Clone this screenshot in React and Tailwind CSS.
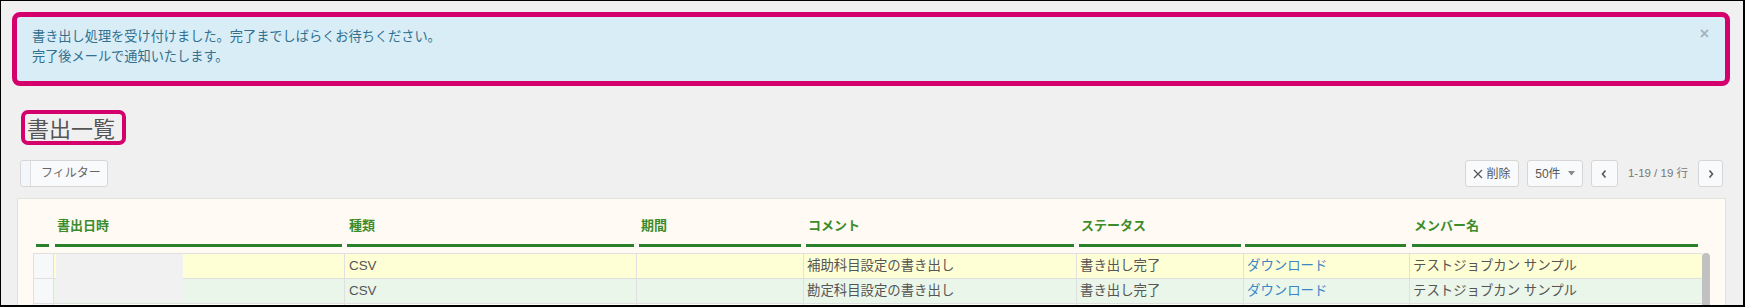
import React from 'react';

const FONT = "font-['Liberation_Sans','Noto_Sans_CJK_JP',sans-serif]";

const columns = [
  { key: 'check', label: '', width: 'w-[20px]', line: 'pl-[3px] pr-[4px]' },
  { key: 'date', label: '書出日時', width: 'w-[291px]', line: 'pl-[2px] pr-[2px]' },
  { key: 'type', label: '種類', width: 'w-[292px]', line: 'pl-[3px] pr-[2px]' },
  { key: 'period', label: '期間', width: 'w-[167px]', line: 'pl-[3px] pr-[2px]' },
  { key: 'comment', label: 'コメント', width: 'w-[273px]', line: 'pl-[3px] pr-[2px]' },
  { key: 'status', label: 'ステータス', width: 'w-[167px]', line: 'pl-[3px] pr-[2px]' },
  { key: 'download', label: '', width: 'w-[166px]', line: 'pl-[2px] pr-[3px]' },
  { key: 'member', label: 'メンバー名', width: 'w-[293px]', line: 'pl-[3px] pr-[4px]' },
];

const rows = [
  { bg: 'bg-[#ffffd6]', type: 'CSV', comment: '補助科目設定の書き出し', status: '書き出し完了', link: 'ダウンロード', member: 'テストジョブカン サンプル' },
  { bg: 'bg-[#eaf6ea]', type: 'CSV', comment: '勘定科目設定の書き出し', status: '書き出し完了', link: 'ダウンロード', member: 'テストジョブカン サンプル' },
  { bg: 'bg-[#fffdf6]', type: '', comment: '', status: '', link: '', member: '' },
];

const ChevronLeft = () => (
  <svg width="8" height="10" viewBox="0 0 8 10" fill="none">
    <path d="M5.5 1.5L2.5 5l3 3.5" stroke="#555" strokeWidth="1.6" />
  </svg>
);

const ChevronRight = () => (
  <svg width="8" height="10" viewBox="0 0 8 10" fill="none">
    <path d="M2.5 1.5L5.5 5l-3 3.5" stroke="#555" strokeWidth="1.6" />
  </svg>
);

const ToolButton = ({ className = '', children }) => (
  <button className={`h-[27px] flex items-center justify-center rounded-[3px] border border-[#d6d6d6] bg-[#f9fafc] text-[12px] text-[#555] ${className}`}>
    {children}
  </button>
);

const App = () => {
  return (
    <div className={`w-[1745px] h-[307px] overflow-hidden bg-[#f0f0f0] border-black border-t border-l border-r-2 border-b-2 ${FONT}`}>
      {/* Alert */}
      <div className="mt-[11px] ml-[11px] w-[1718px] h-[74px] rounded-[8px] border-[5px] border-[#d4006b] bg-[#d9edf7] relative">
        <div className="pt-[10px] pl-[15px] text-[13.2px] leading-[20px] text-[#31708f]">
          <p>書き出し処理を受け付けました。完了までしばらくお待ちください。</p>
          <p>完了後メールで通知いたします。</p>
        </div>
        <span className="absolute right-[16px] top-[9px] text-[16px] font-bold leading-none text-[#a3b4bd]">×</span>
      </div>

      {/* Title */}
      <div className="mt-[24px] ml-[20px] inline-flex h-[35px] items-center rounded-[7px] border-4 border-[#d4006b] pl-[2px] pr-[7px]">
        <h1 className="text-[22px] leading-[27px] text-[#555] font-['Noto_Sans_CJK_JP',sans-serif]">書出一覧</h1>
      </div>

      {/* Toolbar */}
      <div className="mt-[15px] ml-[19px] mr-[20px] flex items-center justify-between">
        <div className="flex h-[27px] w-[88px] rounded-[3px] border border-[#d6d6d6] bg-[#f9fafc]">
          <div className="w-[10px] border-r border-[#dcdcdc] bg-[#f3f6fa] rounded-l-[3px]" />
          <span className="pl-[10px] text-[12px] leading-[25px] text-[#666]">フィルター</span>
        </div>
        <div className="flex items-center">
          <ToolButton className="w-[54px] gap-[3px]">
            <svg width="10" height="10" viewBox="0 0 10 10" fill="none">
              <path d="M1 1l8 8M9 1L1 9" stroke="#555" strokeWidth="1.2" />
            </svg>
            <span>削除</span>
          </ToolButton>
          <ToolButton className="ml-[8px] w-[56px] gap-[7px]">
            <span>50件</span>
            <svg width="7" height="5" viewBox="0 0 7 5">
              <path d="M0 0h7L3.5 4.5z" fill="#888" />
            </svg>
          </ToolButton>
          <ToolButton className="ml-[8px] w-[27px]">
            <ChevronLeft />
          </ToolButton>
          <span className="mx-[10px] text-[11.5px] text-[#777]">1-19 / 19 行</span>
          <ToolButton className="w-[25px]">
            <ChevronRight />
          </ToolButton>
        </div>
      </div>

      {/* Table panel */}
      <div className="mt-[11px] ml-[16px] w-[1709px] h-[200px] border border-[#e1e1e1] bg-[#fffbf4] pl-[15px] pt-[18px]">
        {/* Header */}
        <div className="flex">
          {columns.map((col) => (
            <div key={col.key} className={`${col.width} shrink-0 ${col.line}`}>
              <div className="h-[30px] border-b-[3px] border-[#2b812b] pb-[9px] pl-[2px] text-[13px] leading-[18px] font-bold text-[#3c8c2c] whitespace-nowrap">
                {col.label}
              </div>
            </div>
          ))}
        </div>

        {/* Body */}
        <div className="mt-[6px] flex">
          <div className="relative w-[1669px] shrink-0">
            {rows.map((row, i) => (
              <div key={i} className={`flex h-[25px] border-t border-[#e0e0e0] ${row.bg} text-[13.4px] leading-[24px] text-[#555]`}>
                <div className="w-[20px] shrink-0 border-l border-[#e0e0e0] bg-[#f7f8f9]" />
                <div className="w-[291px] shrink-0 border-l border-[#e0e0e0]" />
                <div className="w-[292px] shrink-0 border-l border-[#e0e0e0] pl-[4px]">{row.type}</div>
                <div className="w-[167px] shrink-0 border-l border-[#e0e0e0]" />
                <div className="w-[273px] shrink-0 border-l border-[#e0e0e0] pl-[3px]">{row.comment}</div>
                <div className="w-[167px] shrink-0 border-l border-[#e0e0e0] pl-[3px]">{row.status}</div>
                <div className="w-[166px] shrink-0 border-l border-[#e0e0e0] pl-[3px] text-[#3b86c6]">{row.link}</div>
                <div className="w-[293px] shrink-0 border-l border-[#e0e0e0] pl-[3px] whitespace-nowrap">{row.member}</div>
              </div>
            ))}
            {/* masked date cells */}
            <div className="absolute left-[23px] top-[1px] w-[127px] h-[48px] bg-[#f1f1f1]" />
          </div>
          <div className="w-[8px] h-[60px] rounded-t-[4px] bg-[#c1c1c1]" />
        </div>
      </div>
    </div>
  );
};

export default App;
